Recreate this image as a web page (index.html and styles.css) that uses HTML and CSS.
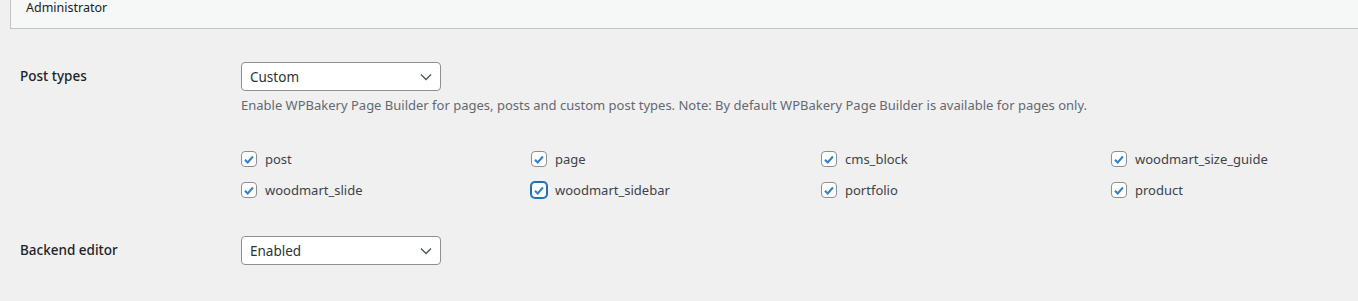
FILE: index.html
```html
<!DOCTYPE html>
<html lang="en">
<head>
    <meta charset="UTF-8">
    <title>WPBakery Role Manager</title>
    <link rel="stylesheet" href="styles.css">
</head>
<body>

    <!-- Role tab -->
    <div class="role-bar">
        <span class="role-name">Administrator</span>
    </div>

    <!-- Settings rows -->
    <div class="settings">
        <div class="setting-row">
            <div class="setting-label">Post types</div>
            <div class="setting-field">
                <div class="select">
                    <span>Custom</span>
                    <svg class="chevron" viewBox="0 0 12 8" width="12" height="8"><path d="M1 1.5l5 5 5-5" fill="none" stroke="#50575e" stroke-width="1.4"/></svg>
                </div>
                <p class="description">Enable WPBakery Page Builder for pages, posts and custom post types. Note: By default WPBakery Page Builder is available for pages only.</p>

                <div class="post-types">
                    <label class="check"><span class="box"><svg viewBox="0 0 16 16"><path d="M3.4 8.2l3.1 3.1 6-6.8" /></svg></span>post</label>
                    <label class="check"><span class="box"><svg viewBox="0 0 16 16"><path d="M3.4 8.2l3.1 3.1 6-6.8" /></svg></span>page</label>
                    <label class="check"><span class="box"><svg viewBox="0 0 16 16"><path d="M3.4 8.2l3.1 3.1 6-6.8" /></svg></span>cms_block</label>
                    <label class="check"><span class="box"><svg viewBox="0 0 16 16"><path d="M3.4 8.2l3.1 3.1 6-6.8" /></svg></span>woodmart_size_guide</label>
                    <label class="check"><span class="box"><svg viewBox="0 0 16 16"><path d="M3.4 8.2l3.1 3.1 6-6.8" /></svg></span>woodmart_slide</label>
                    <label class="check"><span class="box box-focus"><svg viewBox="0 0 16 16"><path d="M3.4 8.2l3.1 3.1 6-6.8" /></svg></span>woodmart_sidebar</label>
                    <label class="check"><span class="box"><svg viewBox="0 0 16 16"><path d="M3.4 8.2l3.1 3.1 6-6.8" /></svg></span>portfolio</label>
                    <label class="check"><span class="box"><svg viewBox="0 0 16 16"><path d="M3.4 8.2l3.1 3.1 6-6.8" /></svg></span>product</label>
                </div>
            </div>
        </div>

        <div class="setting-row">
            <div class="setting-label">Backend editor</div>
            <div class="setting-field">
                <div class="select">
                    <span>Enabled</span>
                    <svg class="chevron" viewBox="0 0 12 8" width="12" height="8"><path d="M1 1.5l5 5 5-5" fill="none" stroke="#50575e" stroke-width="1.4"/></svg>
                </div>
            </div>
        </div>
    </div>

</body>
</html>
```

FILE: styles.css
```css
/* Reset and page */
*, *::before, *::after {
    box-sizing: border-box;
    margin: 0;
    padding: 0;
}

body {
    font-family: 'Noto Sans', sans-serif;
    font-size: 13px;
    color: #1d2327;
    background-color: #f0f0f1;
}

/* Role tab at the top */
.role-bar {
    margin-left: 10px;
    height: 29px;
    background-color: #f6f7f7;
    border-left: 1px solid #c3c4c7;
    border-bottom: 1px solid #c3c4c7;
    padding-left: 15px;
}

.role-name {
    display: block;
    font-size: 12.5px;
    line-height: 15px;
}

/* Settings table */
.settings {
    padding: 33px 0 0 20px;
}

.setting-row {
    display: grid;
    grid-template-columns: 221px 1fr;
    margin-bottom: 38px;
}

.setting-label {
    font-size: 13.5px;
    font-weight: 500;
    line-height: 28px;
}

/* Select box */
.select {
    width: 200px;
    height: 29px;
    background-color: #fff;
    border: 1px solid #8c8f94;
    border-radius: 4px;
    padding: 0 8px;
    display: flex;
    align-items: center;
    justify-content: space-between;
    font-size: 13.5px;
    color: #2c3338;
}

.description {
    margin-top: 5px;
    color: #646970;
    font-size: 13px;
    line-height: 18px;
}

/* Post type checkboxes */
.post-types {
    display: grid;
    grid-template-columns: repeat(4, 290px);
    row-gap: 15px;
    margin-top: 37px;
}

.check {
    display: flex;
    align-items: center;
    gap: 8px;
    font-size: 13px;
    line-height: 16px;
    color: #3c434a;
}

.box {
    width: 16px;
    height: 16px;
    background-color: #fff;
    border: 1px solid #8c8f94;
    border-radius: 4px;
    display: flex;
    align-items: center;
    justify-content: center;
}

.box svg {
    width: 15px;
    height: 15px;
    fill: none;
    stroke: #3582c4;
    stroke-width: 2.4;
}

/* Focused checkbox */
.box-focus {
    border-color: #2271b1;
    box-shadow: 0 0 0 1px #2271b1;
}
```
